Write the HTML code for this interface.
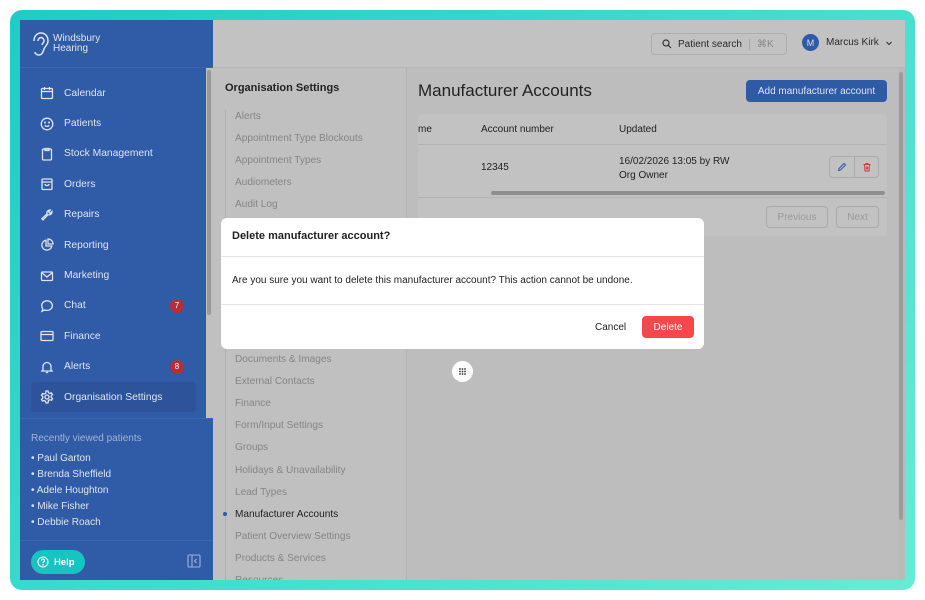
<!DOCTYPE html>
<html><head><meta charset="utf-8"><style>
*{box-sizing:border-box;margin:0;padding:0}
body{width:925px;height:600px;background:#fff;font-family:"Liberation Sans",sans-serif;position:relative;overflow:hidden}
.frame{position:absolute;left:10px;top:10px;width:905px;height:580px;border-radius:12px;background:linear-gradient(135deg,#1bcdc8,#64edd4)}
.app{position:absolute;left:20px;top:20px;width:885px;height:560px;background:#bdbdbd;overflow:hidden}
.side{position:absolute;left:0;top:0;width:193px;height:560px;background:#305ca7;color:#dde4f0}
.logo{height:48px;border-bottom:1px solid #3b66ae;display:flex;align-items:center;padding-left:11px}
.logo span{font-size:10px;line-height:10px;margin-left:4px;color:#dfe5f0}
.nav{position:absolute;top:58px;left:0;width:186px}
.it{height:30.4px;display:flex;align-items:center;padding-left:20px;font-size:10.3px;position:relative}
.it svg{width:14px;height:14px;margin-right:10px;fill:none;stroke:#dde4f0;stroke-width:1.3}
.badge{position:absolute;left:150px;width:14px;height:14px;border-radius:50%;background:#b52f3a;color:#fff;font-size:8px;display:flex;align-items:center;justify-content:center}
.act{background:#2d549a;border-radius:4px;margin:0 10px 0 11px;padding-left:9px}
.sb{position:absolute;left:186px;top:48px;width:7px;height:350px;background:#c0c0c0}
.sb i{position:absolute;left:1px;top:2px;width:4px;height:245px;background:#9a9a9a;border-radius:2px}
.recent{position:absolute;top:398px;left:0;width:193px;border-top:1px solid #3b66ae;padding:14px 11px;font-size:10px}
.recent p{color:#9fb2d6;margin-bottom:7px}
.recent div{line-height:16px}
.foot{position:absolute;top:520px;left:0;width:193px;height:40px;border-top:1px solid #3b66ae}
.help{position:absolute;left:11px;top:9px;width:54px;height:24px;border-radius:12px;background:#17c4c2;color:#fff;font-size:9.5px;font-weight:bold;display:flex;align-items:center;padding-left:6px}
.top{position:absolute;left:193px;top:0;right:0;height:48px;background:#c2c2c2;border-bottom:1px solid #b8b8b8}
.search{position:absolute;left:438px;top:13px;width:136px;height:22px;border:1px solid #adadad;border-radius:4px;font-size:10px;color:#2a2a2a;display:flex;align-items:center;padding-left:10px}
.user{position:absolute;left:589px;top:14px;font-size:10px;color:#2a2a2a;display:flex;align-items:center}
.av{width:17px;height:17px;border-radius:50%;background:#2e5ba7;color:#dde;font-size:9px;display:flex;align-items:center;justify-content:center;margin-right:7px}
.set{position:absolute;left:193px;top:48px;width:194px;height:512px;background:#c0c0c0;border-right:1px solid #b3b3b3}
.set h3{font-size:11px;font-weight:bold;color:#222;position:absolute;left:12px;top:14px}
.list{position:absolute;left:12px;top:42px;border-left:1px solid #b0b0b0;height:480px}
.list div{font-size:10.1px;color:#858585;height:22.1px;padding-left:9px;line-height:14px}
.main{position:absolute;left:387px;top:48px;right:0;height:512px}
.main h1{position:absolute;left:11px;top:13px;font-size:17px;font-weight:normal;color:#222}
.add{position:absolute;left:339px;top:12px;width:141px;height:22px;background:#2f5aa6;border-radius:4px;color:#dbe3f0;font-size:10px;display:flex;align-items:center;justify-content:center}
.tbl{position:absolute;left:11px;top:46px;width:469px;height:122px;background:#c2c2c2;border-radius:4px;font-size:10px;color:#222}
.msb{position:absolute;right:0;top:0;width:7px;height:512px;background:#bababa}
.msb i{position:absolute;left:1px;top:4px;width:4px;height:448px;background:#9c9c9c;border-radius:2px}
.btn{position:absolute;height:22px;border:1px solid #aaa;border-radius:4px;color:#999;font-size:10px;display:flex;align-items:center;justify-content:center}
.modal{position:absolute;left:221px;top:218px;width:483px;height:131px;background:#fff;border-radius:6px;color:#222}
.modal .h{height:39px;border-bottom:1px solid #e6e6e6;font-size:11px;font-weight:bold;padding:12px 11px}
.modal .b{height:48px;border-bottom:1px solid #e6e6e6;font-size:10px;padding:18px 11px}
.del{position:absolute;left:421px;top:98px;width:52px;height:22px;background:#f5484d;color:#fff;border-radius:4px;font-size:10px;display:flex;align-items:center;justify-content:center}
</style></head><body>
<div class="frame"></div>
<div class="app">
 <div class="side">
  <div class="logo"><svg width="18" height="26" viewBox="0 0 18 26" fill="none" stroke="#dfe5f0" stroke-width="1.5"><path d="M3 10C3 5 6 2 10 2s7 3 7 8c0 4-3 5-4 8s-2 6-5 6-4-2-4-3"/><path d="M7 10c0-2 1.5-3.5 3-3.5s3 1.5 3 3.5-2 2-2 4"/></svg><span>Windsbury<br>Hearing</span></div>
  <div class="nav">
   <div class="it"><svg viewBox="0 0 14 14"><rect x="1.5" y="2.5" width="11" height="10" rx="1"/><path d="M1.5 5.5h11M4.5 1v3M9.5 1v3"/></svg>Calendar</div>
   <div class="it"><svg viewBox="0 0 14 14"><circle cx="7" cy="7" r="5.8"/><path d="M4.7 8.3c1.2 1.4 3.4 1.4 4.6 0"/><circle cx="5" cy="5.5" r=".4"/><circle cx="9" cy="5.5" r=".4"/></svg>Patients</div>
   <div class="it"><svg viewBox="0 0 14 14"><rect x="2.5" y="2" width="9" height="11" rx="1"/><path d="M5 1.5h4v2H5z"/></svg>Stock Management</div>
   <div class="it"><svg viewBox="0 0 14 14"><rect x="2" y="2" width="10" height="10.5" rx="1"/><path d="M2 5h10M5 7c0 2 4 2 4 0"/></svg>Orders</div>
   <div class="it"><svg viewBox="0 0 14 14"><path d="M12 3.5a3 3 0 0 1-4 3.2L3 12l-1.2-1.2 5.2-5A3 3 0 0 1 10.3 2L8.5 3.8l1.6 1.6z"/></svg>Repairs</div>
   <div class="it"><svg viewBox="0 0 14 14"><path d="M6 2.2A5 5 0 1 0 11.8 8H6z"/><path d="M8 1a5 5 0 0 1 5 5H8z"/></svg>Reporting</div>
   <div class="it"><svg viewBox="0 0 14 14"><rect x="1.5" y="3" width="11" height="8.5" rx="1"/><path d="M1.5 3.5 7 8l5.5-4.5"/></svg>Marketing</div>
   <div class="it"><svg viewBox="0 0 14 14"><path d="M7 1.8c3 0 5.3 2 5.3 4.8S10 11.4 7 11.4c-.8 0-1.5-.1-2.2-.4L2 12.3l.8-2.4C2 9 1.7 7.9 1.7 6.6 1.7 3.8 4 1.8 7 1.8z"/></svg>Chat<span class="badge">7</span></div>
   <div class="it"><svg viewBox="0 0 14 14"><rect x="1" y="2.5" width="12" height="9" rx="1"/><path d="M1 5.5h12"/></svg>Finance</div>
   <div class="it"><svg viewBox="0 0 14 14"><path d="M3 10V6.5a4 4 0 0 1 8 0V10l1 1H2z"/><path d="M5.8 12.5h2.4"/></svg>Alerts<span class="badge">8</span></div>
   <div class="it act"><svg viewBox="0 0 14 14"><circle cx="7" cy="7" r="2"/><path d="M6 1h2l.4 1.7 1.5.8 1.6-.6 1 1.7-1.3 1.2v1.6l1.3 1.2-1 1.7-1.6-.6-1.5.8L8 13H6l-.4-1.7-1.5-.8-1.6.6-1-1.7 1.3-1.2V6.4L1.5 5.2l1-1.7 1.6.6 1.5-.8z"/></svg>Organisation Settings</div>
  </div>
  <div class="sb"><i></i></div>
  <div class="recent"><p>Recently viewed patients</p>
   <div>• Paul Garton</div><div>• Brenda Sheffield</div><div>• Adele Houghton</div><div>• Mike Fisher</div><div>• Debbie Roach</div></div>
  <div class="foot"><div class="help"><svg width="12" height="12" viewBox="0 0 12 12" fill="none" stroke="#fff" stroke-width="1.1" style="margin-right:5px"><circle cx="6" cy="6" r="5"/><path d="M4.5 4.6a1.5 1.5 0 1 1 2 1.4c-.4.2-.5.5-.5.9"/><circle cx="6" cy="8.7" r=".3"/></svg>Help</div>
   <svg style="position:absolute;left:167px;top:13px" width="14" height="14" viewBox="0 0 14 14" fill="none" stroke="#9fb2d6" stroke-width="1.1"><rect x="1" y="1" width="12" height="12" rx="1"/><path d="M5 1v12M9.5 5 7.5 7l2 2"/></svg></div>
 </div>
 <div class="top">
  <div class="search"><svg width="10" height="10" viewBox="0 0 10 10" fill="none" stroke="#333" stroke-width="1.2" style="margin-right:6px"><circle cx="4" cy="4" r="3"/><path d="M6.3 6.3 9 9"/></svg>Patient search<span style="border-left:1px solid #aaa;margin-left:7px;padding-left:7px;color:#888">⌘K</span></div>
  <div class="user"><div class="av">M</div>Marcus Kirk<svg width="8" height="8" viewBox="0 0 8 8" fill="none" stroke="#333" stroke-width="1.1" style="margin-left:6px"><path d="M1.5 3 4 5.5 6.5 3"/></svg></div>
 </div>
 <div class="set"><h3>Organisation Settings</h3>
  <div class="list">
   <div>Alerts</div><div>Appointment Type Blockouts</div><div>Appointment Types</div><div>Audiometers</div><div>Audit Log</div><div></div><div></div><div></div><div></div><div></div><div></div>
   <div>Documents &amp; Images</div><div>External Contacts</div><div>Finance</div><div>Form/Input Settings</div><div>Groups</div><div>Holidays &amp; Unavailability</div><div>Lead Types</div>
   <div style="color:#222;position:relative"><span style="position:absolute;left:-3px;top:4px;width:4px;height:4px;border-radius:50%;background:#2f5aa6"></span>Manufacturer Accounts</div>
   <div>Patient Overview Settings</div><div>Products &amp; Services</div><div>Resources</div>
  </div>
 </div>
 <div class="main">
  <h1>Manufacturer Accounts</h1>
  <div class="add">Add manufacturer account</div>
  <div class="tbl">
   <div style="position:absolute;left:0;top:0;width:100%;height:31px;border-bottom:1px solid #b3b3b3"></div>
   <span style="position:absolute;left:0;top:10px">me</span>
   <span style="position:absolute;left:63px;top:10px">Account number</span>
   <span style="position:absolute;left:201px;top:10px">Updated</span>
   <span style="position:absolute;left:63px;top:48px">12345</span>
   <span style="position:absolute;left:201px;top:41px;line-height:14px">16/02/2026 13:05 by RW<br>Org Owner</span>
   <div style="position:absolute;left:411px;top:42px;width:50px;height:22px;border:1px solid #ababab;border-radius:4px"><span style="position:absolute;left:24px;top:0;height:20px;border-left:1px solid #ababab"></span>
    <svg style="position:absolute;left:7px;top:5px" width="10" height="10" viewBox="0 0 10 10" fill="none" stroke="#2f5aa6" stroke-width="1"><path d="M7 1.5 8.5 3 3.5 8 1.5 8.5 2 6.5z"/></svg>
    <svg style="position:absolute;left:32px;top:5px" width="10" height="10" viewBox="0 0 10 10" fill="none" stroke="#d23a3a" stroke-width="1"><path d="M1.5 2.5h7M4 2.5V1.5h2v1M2.5 2.5l.5 6.5h4l.5-6.5M4.3 4.5v3M5.7 4.5v3"/></svg></div>
   <div style="position:absolute;left:0;top:76px;width:100%;height:8px;border-bottom:1px solid #b3b3b3"><i style="position:absolute;left:73px;top:1px;width:394px;height:4px;background:#8f8f8f;border-radius:2px"></i></div>
   <div class="btn" style="left:348px;top:92px;width:62px">Previous</div>
   <div class="btn" style="left:418px;top:92px;width:43px">Next</div>
  </div>
  <div class="msb"><i></i></div>
 </div>
</div>
<div class="modal">
 <div class="h">Delete manufacturer account?</div>
 <div class="b">Are you sure you want to delete this manufacturer account? This action cannot be undone.</div>
 <span style="position:absolute;left:374px;top:104px;font-size:10px">Cancel</span>
 <div class="del">Delete</div>
</div>
<div style="position:absolute;left:452px;top:361px;width:21px;height:21px;border-radius:50%;background:#fff">
 <svg width="21" height="21" viewBox="0 0 21 21" fill="#333"><circle cx="8" cy="8" r=".9"/><circle cx="10.5" cy="8" r=".9"/><circle cx="13" cy="8" r=".9"/><circle cx="8" cy="10.5" r=".9"/><circle cx="10.5" cy="10.5" r=".9"/><circle cx="13" cy="10.5" r=".9"/><circle cx="8" cy="13" r=".9"/><circle cx="10.5" cy="13" r=".9"/><circle cx="13" cy="13" r=".9"/></svg></div>
</body></html>
